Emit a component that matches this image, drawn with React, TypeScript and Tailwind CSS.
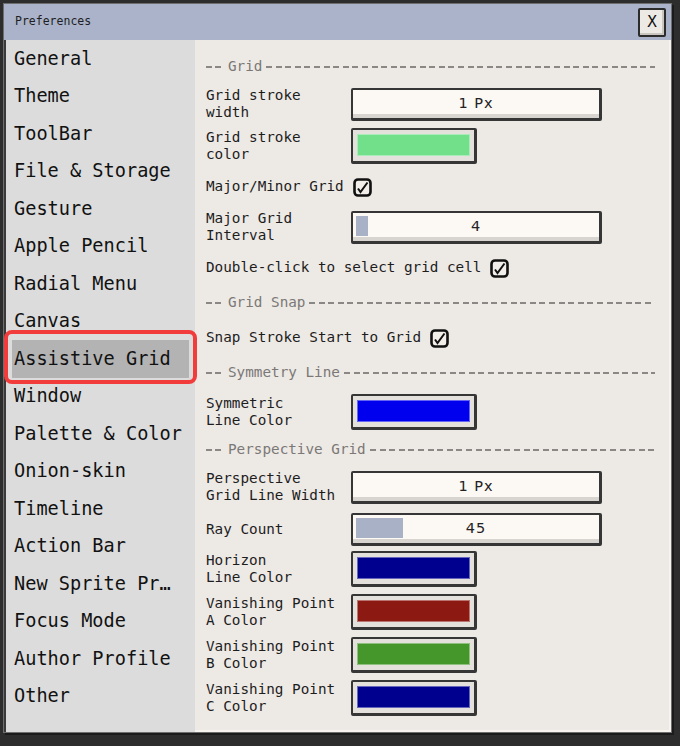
import type { ReactNode } from "react"

const mono = "font-['DejaVu_Sans_Mono','Liberation_Mono',monospace]"

const menu = [
  "General",
  "Theme",
  "ToolBar",
  "File & Storage",
  "Gesture",
  "Apple Pencil",
  "Radial Menu",
  "Canvas",
  "Assistive Grid",
  "Window",
  "Palette & Color",
  "Onion-skin",
  "Timeline",
  "Action Bar",
  "New Sprite Pr…",
  "Focus Mode",
  "Author Profile",
  "Other",
]

function Header({ title, h }: { title: string; h: string }) {
  return (
    <div className={`flex items-center gap-[4px] pr-[14px] text-[14.3px] text-[#7b7876] ${h}`}>
      <div className="h-[2px] w-[18px] bg-[repeating-linear-gradient(90deg,#8a8784_0_6px,transparent_6px_9px)]" />
      <span>{title}</span>
      <div className="h-[2px] flex-1 bg-[repeating-linear-gradient(90deg,#8a8784_0_6px,transparent_6px_9.6px)]" />
    </div>
  )
}

function Label({ lines }: { lines: string[] }) {
  return (
    <div className="w-[145px] shrink-0 text-[14.3px] leading-[17px] text-[#1d1d1d]">
      {lines.map((l) => (
        <div key={l}>{l}</div>
      ))}
    </div>
  )
}

function Row({ h, children }: { h: string; children: ReactNode }) {
  return <div className={`flex items-center ${h}`}>{children}</div>
}

// wide value field, optional bar for slider-type settings
function Field({ value, fill }: { value: string; fill?: number }) {
  return (
    <div className="relative flex h-[33px] w-[251px] items-center justify-center rounded-[2px] border-2 border-r-[3px] border-b-[3px] border-[#363636] bg-[#fcf8f4] shadow-[inset_0_-4px_0_#d8d4d0]">
      {fill !== undefined && (
        <div
          className="absolute top-[3px] bottom-[5px] left-[3px] bg-[#a9b1c6]"
          style={{ width: fill }}
        />
      )}
      <span className="relative font-['DejaVu_Sans',sans-serif] text-[14.5px] tracking-[1px] text-[#222]">
        {value}
      </span>
    </div>
  )
}

function Swatch({ color }: { color: string }) {
  return (
    <div className="h-[36px] w-[126px] rounded-[2px] border-2 border-r-[3px] border-b-[3px] border-[#363636] bg-[#e4e0dc] p-[4px] pb-[5px]">
      <div className="h-full w-full border border-white/40" style={{ background: color }} />
    </div>
  )
}

function Check() {
  return (
    <svg width="19" height="19" viewBox="0 0 19 19" className="ml-[9px] shrink-0">
      <rect x="1.5" y="1.5" width="16" height="16" rx="3.5" fill="#f2eeea" stroke="#111" strokeWidth="2.6" />
      <path d="M5 10.5 L7.5 14 L14.5 4.5" fill="none" stroke="#111" strokeWidth="2" />
    </svg>
  )
}

export default function App() {
  return (
    <div className={`relative h-[746px] w-[680px] overflow-hidden bg-[#2d2d2d] pt-[3px] pl-[3px] ${mono}`}>
      <div className="flex h-[730px] w-[669px] flex-col border border-[#6e6e6e] shadow-[2px_2px_0_#1b1b1b]">
        {/* title bar */}
        <div className="flex h-[36px] items-center justify-between bg-[#aab3c9] pr-[5px] pl-[11px]">
          <span className="text-[11.5px] text-[#1e1e24]">Preferences</span>
          <div className="flex h-[29px] w-[28px] items-center justify-center rounded-[2px] border-2 border-[#2c2c2c] bg-[#edeae6] shadow-[inset_-2px_-2px_0_#c9c5c1]">
            <span className="text-[16px] leading-none text-[#111]">X</span>
          </div>
        </div>

        <div className="flex flex-1">
          {/* sidebar */}
          <div className="w-[191px] border-l-2 border-[#3a3a3a] bg-[#dcdcdc] px-[6px]">
            {menu.map((name) => (
              <div
                key={name}
                className={`flex h-[37.5px] items-center px-[2px] text-[18.6px] text-[#111] ${
                  name === "Assistive Grid" ? "bg-[#b3b3b3]" : ""
                }`}
              >
                {name}
              </div>
            ))}
          </div>

          {/* settings */}
          <div className="flex-1 border-r-2 border-b-2 border-[#f7f4f0] bg-[#ede9e5] pt-[11px] pl-[11px]">
            <Header title="Grid" h="h-[32px]" />
            <Row h="h-[42px]">
              <Label lines={["Grid stroke", "width"]} />
              <Field value="1 Px" />
            </Row>
            <Row h="h-[42px]">
              <Label lines={["Grid stroke", "color"]} />
              <Swatch color="#72df8a" />
            </Row>
            <Row h="h-[40px]">
              <span className="text-[14.3px] text-[#1d1d1d]">Major/Minor Grid</span>
              <Check />
            </Row>
            <Row h="h-[40px]">
              <Label lines={["Major Grid", "Interval"]} />
              <Field value="4" fill={12} />
            </Row>
            <Row h="h-[42px]">
              <span className="text-[14.3px] text-[#1d1d1d]">Double-click to select grid cell</span>
              <Check />
            </Row>
            <Header title="Grid Snap" h="h-[28px]" />
            <Row h="h-[42px]">
              <span className="text-[14.3px] text-[#1d1d1d]">Snap Stroke Start to Grid</span>
              <Check />
            </Row>
            <Header title="Symmetry Line" h="h-[28px]" />
            <Row h="h-[50px]">
              <Label lines={["Symmetric", "Line Color"]} />
              <Swatch color="#0000ee" />
            </Row>
            <Header title="Perspective Grid" h="h-[26px]" />
            <Row h="h-[48px]">
              <Label lines={["Perspective", "Grid Line Width"]} />
              <Field value="1 Px" />
            </Row>
            <Row h="h-[36px]">
              <Label lines={["Ray Count"]} />
              <Field value="45" fill={47} />
            </Row>
            <Row h="h-[43px]">
              <Label lines={["Horizon", "Line Color"]} />
              <Swatch color="#00008f" />
            </Row>
            <Row h="h-[43px]">
              <Label lines={["Vanishing Point", "A Color"]} />
              <Swatch color="#8c1a12" />
            </Row>
            <Row h="h-[43px]">
              <Label lines={["Vanishing Point", "B Color"]} />
              <Swatch color="#46972b" />
            </Row>
            <Row h="h-[43px]">
              <Label lines={["Vanishing Point", "C Color"]} />
              <Swatch color="#00008f" />
            </Row>
          </div>
        </div>
      </div>

      {/* highlight ring around the active section */}
      <div className="absolute top-[330px] left-[4px] h-[54px] w-[193px] rounded-[8px] border-4 border-[#f23b3b]" />
    </div>
  )
}
